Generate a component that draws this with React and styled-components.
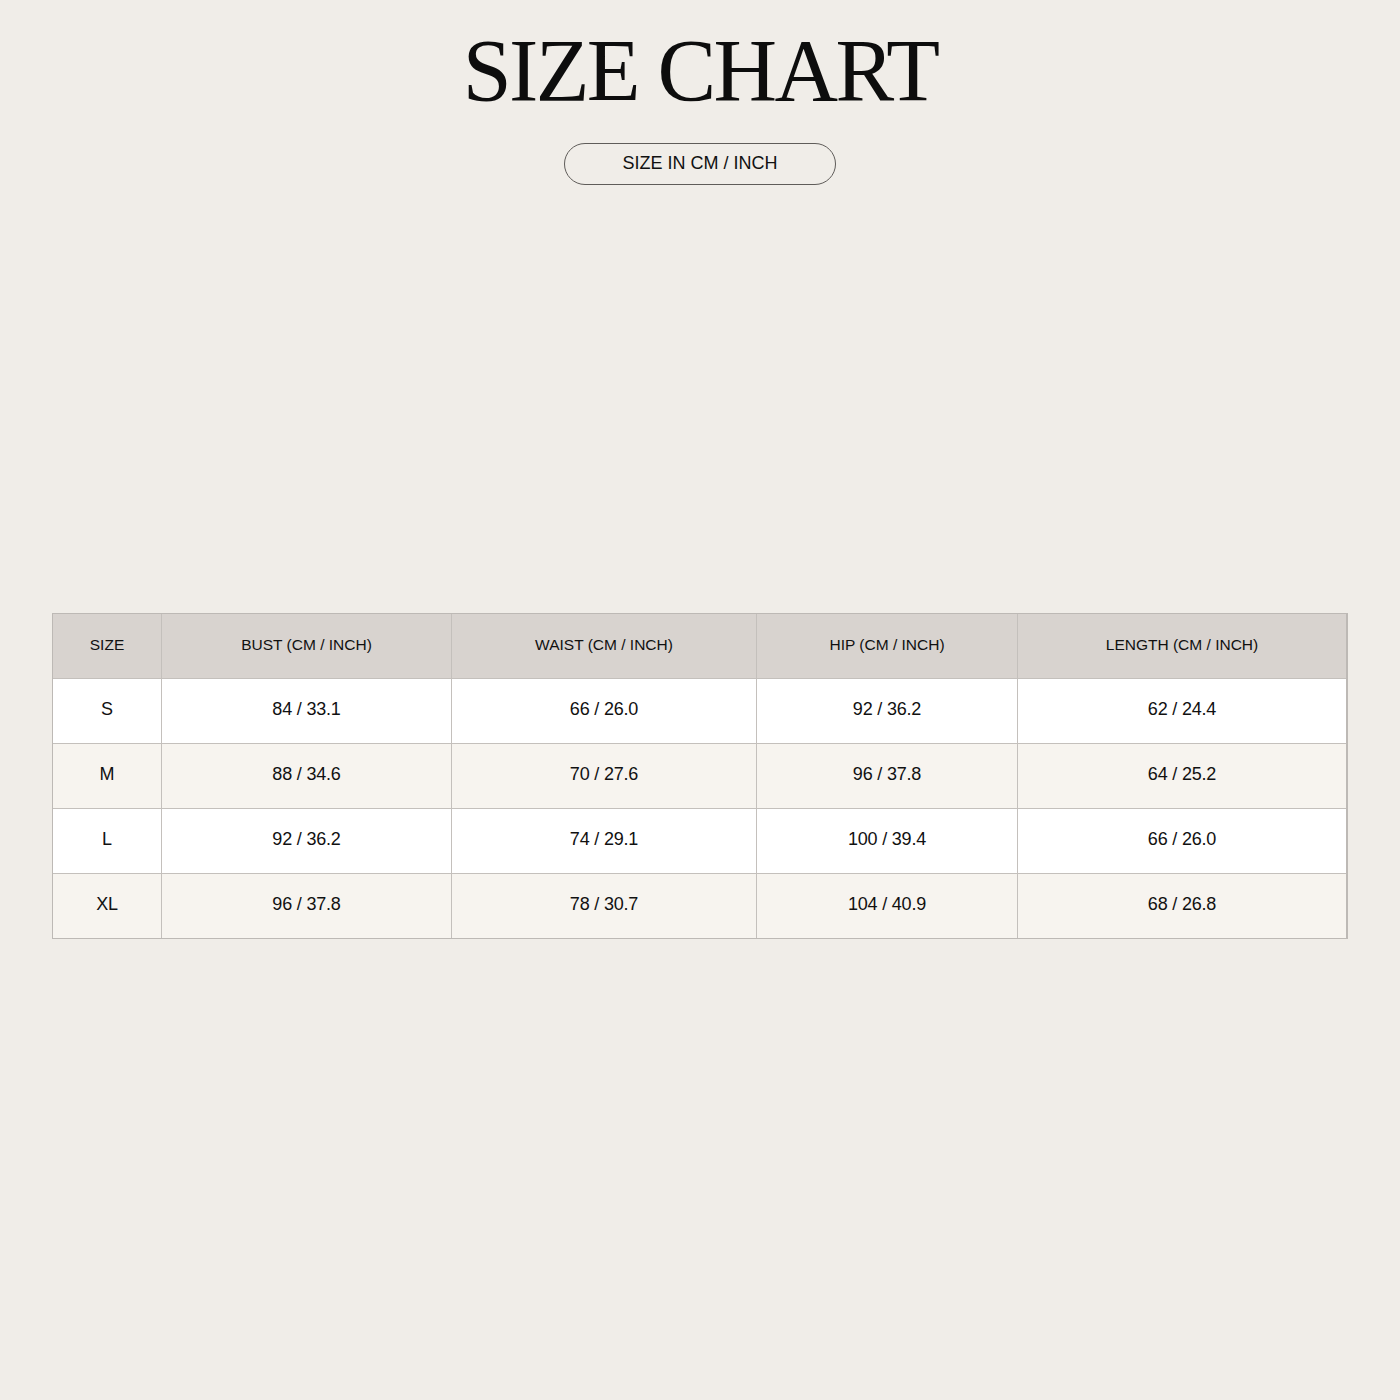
import styled, { createGlobalStyle } from "styled-components";

const GlobalStyle = createGlobalStyle`
    html, body {
        margin: 0;
        padding: 0;
        background: #f0ede8;
    }

    body {
        font-family: "Liberation Sans", Arial, sans-serif;
        color: #111111;
    }
`;

const Page = styled.div`
    width: 1400px;
    height: 1400px;
    box-sizing: border-box;
    padding: 27px 52px 0;
    display: flex;
    flex-direction: column;
    align-items: center;
`;

const Title = styled.h1`
    margin: 0;
    font-family: "Liberation Serif", "DejaVu Serif", serif;
    font-weight: 400;
    font-size: 88px;
    line-height: 88px;
    letter-spacing: -2.6px;
    color: #0d0d0d;
`;

const Pill = styled.div`
    margin-top: 28px;
    width: 272px;
    height: 42px;
    box-sizing: border-box;
    border: 1px solid #5f5c59;
    border-radius: 21px;
    display: flex;
    justify-content: center;
    align-items: center;
    padding-bottom: 1px;
    font-size: 18px;
    color: #111111;
`;

const Table = styled.div`
    margin-top: 428px;
    width: 100%;
    display: grid;
    grid-template-columns: 108px 290px 305px 261px 1fr;
    border: 1px solid #bdb9b5;
    border-right-width: 2px;
    box-sizing: border-box;
`;

const Cell = styled.div`
    height: ${(p) => (p.$top ? "64px" : "65px")};
    display: flex;
    justify-content: center;
    align-items: center;
    box-sizing: border-box;
    padding-bottom: 3px;
    border-left: ${(p) => (p.$first ? "none" : "1px solid #c4c0bc")};
    border-top: ${(p) => (p.$top ? "none" : "1px solid #c4c0bc")};
    background: ${(p) => p.$bg};
    color: #111111;
`;

const HeadCell = styled(Cell)`
    font-size: 15.5px;
`;

const BodyCell = styled(Cell)`
    font-size: 18px;
    letter-spacing: -0.2px;
`;

const headers = [
    "SIZE",
    "BUST (CM / INCH)",
    "WAIST (CM / INCH)",
    "HIP (CM / INCH)",
    "LENGTH (CM / INCH)",
];

const rows = [
    ["S", "84 / 33.1", "66 / 26.0", "92 / 36.2", "62 / 24.4"],
    ["M", "88 / 34.6", "70 / 27.6", "96 / 37.8", "64 / 25.2"],
    ["L", "92 / 36.2", "74 / 29.1", "100 / 39.4", "66 / 26.0"],
    ["XL", "96 / 37.8", "78 / 30.7", "104 / 40.9", "68 / 26.8"],
];

function App() {
    return (
        <Page>
            <GlobalStyle />
            <Title>SIZE CHART</Title>
            <Pill>SIZE IN CM / INCH</Pill>

            <Table>
                {headers.map((h, i) => (
                    <HeadCell key={h} $first={i === 0} $top $bg="#d8d3cf">
                        {h}
                    </HeadCell>
                ))}
                {rows.map((row, r) =>
                    row.map((v, i) => (
                        <BodyCell
                            key={r + "-" + i}
                            $first={i === 0}
                            $bg={r % 2 === 0 ? "#ffffff" : "#f7f4ef"}
                        >
                            {v}
                        </BodyCell>
                    ))
                )}
            </Table>
        </Page>
    );
}

export default App;
